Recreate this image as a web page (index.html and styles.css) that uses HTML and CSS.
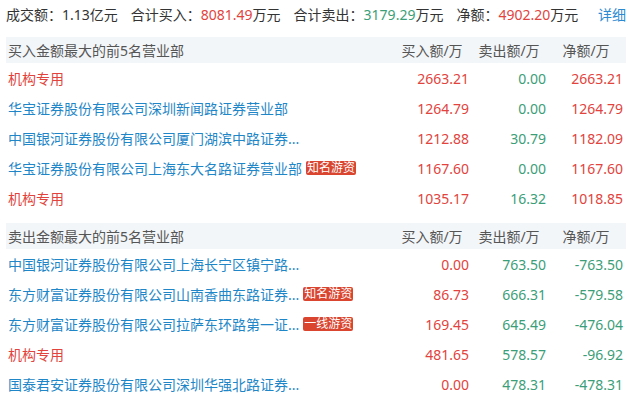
FILE: index.html
```html
<!DOCTYPE html>
<html lang="zh-CN">
<head>
<meta charset="utf-8">
<link rel="stylesheet" href="styles.css">
</head>
<body>
<div class="page">
  <div class="summary">
    <span class="item">成交额：1.13亿元</span>
    <span class="item">合计买入：<span class="red">8081.49</span>万元</span>
    <span class="item">合计卖出：<span class="green">3179.29</span>万元</span>
    <span class="item">净额：<span class="red">4902.20</span>万元</span>
    <a class="detail">详细</a>
  </div>

  <div class="section">
    <div class="row head">
      <div class="name">买入金额最大的前5名营业部</div>
      <div class="num">买入额/万</div>
      <div class="num">卖出额/万</div>
      <div class="num">净额/万</div>
    </div>
    <div class="row">
      <div class="name"><span class="inst">机构专用</span></div>
      <div class="num red">2663.21</div>
      <div class="num green">0.00</div>
      <div class="num red">2663.21</div>
    </div>
    <div class="row">
      <div class="name"><span class="link">华宝证券股份有限公司深圳新闻路证券营业部</span></div>
      <div class="num red">1264.79</div>
      <div class="num green">0.00</div>
      <div class="num red">1264.79</div>
    </div>
    <div class="row">
      <div class="name"><span class="link">中国银河证券股份有限公司厦门湖滨中路证券...</span></div>
      <div class="num red">1212.88</div>
      <div class="num green">30.79</div>
      <div class="num red">1182.09</div>
    </div>
    <div class="row">
      <div class="name"><span class="link">华宝证券股份有限公司上海东大名路证券营业部</span><span class="badge">知名游资</span></div>
      <div class="num red">1167.60</div>
      <div class="num green">0.00</div>
      <div class="num red">1167.60</div>
    </div>
    <div class="row">
      <div class="name"><span class="inst">机构专用</span></div>
      <div class="num red">1035.17</div>
      <div class="num green">16.32</div>
      <div class="num red">1018.85</div>
    </div>
  </div>

  <div class="section">
    <div class="row head">
      <div class="name">卖出金额最大的前5名营业部</div>
      <div class="num">买入额/万</div>
      <div class="num">卖出额/万</div>
      <div class="num">净额/万</div>
    </div>
    <div class="row">
      <div class="name"><span class="link">中国银河证券股份有限公司上海长宁区镇宁路...</span></div>
      <div class="num red">0.00</div>
      <div class="num green">763.50</div>
      <div class="num green">-763.50</div>
    </div>
    <div class="row">
      <div class="name"><span class="link">东方财富证券股份有限公司山南香曲东路证券...</span><span class="badge">知名游资</span></div>
      <div class="num red">86.73</div>
      <div class="num green">666.31</div>
      <div class="num green">-579.58</div>
    </div>
    <div class="row">
      <div class="name"><span class="link">东方财富证券股份有限公司拉萨东环路第一证...</span><span class="badge">一线游资</span></div>
      <div class="num red">169.45</div>
      <div class="num green">645.49</div>
      <div class="num green">-476.04</div>
    </div>
    <div class="row">
      <div class="name"><span class="inst">机构专用</span></div>
      <div class="num red">481.65</div>
      <div class="num green">578.57</div>
      <div class="num green">-96.92</div>
    </div>
    <div class="row">
      <div class="name"><span class="link">国泰君安证券股份有限公司深圳华强北路证券...</span></div>
      <div class="num red">0.00</div>
      <div class="num green">478.31</div>
      <div class="num green">-478.31</div>
    </div>
  </div>
</div>
</body>
</html>
```

FILE: styles.css
```css
html, body {
  margin: 0;
  padding: 0;
  background: #ffffff;
}

.page {
  width: 628px;
  padding: 0 2px 0 6px;
  box-sizing: border-box;
  font-family: "Noto Sans", "Noto Sans CJK SC", sans-serif;
  font-size: 14px;
  color: #333333;
}

.summary {
  display: flex;
  align-items: center;
  height: 28px;
  margin-bottom: 9px;
  white-space: nowrap;
}

.summary .item {
  margin-right: 13px;
}

.detail {
  margin-left: auto;
  color: #2b8ad2;
  cursor: pointer;
}

.red { color: #e2433d; }
.green { color: #3b9e78; }

.section + .section {
  margin-top: 10px;
}

.row {
  display: grid;
  grid-template-columns: 1fr 77px 77px 77px;
  align-items: center;
  height: 30px;
  padding: 0 3px 0 2px;
  white-space: nowrap;
}

.row.head {
  height: 26px;
  background: #f3f6f9;
  color: #555555;
}

.row.head .num {
  text-align: center;
}

.name {
  display: flex;
  align-items: center;
  overflow: hidden;
}

.num {
  padding-left: 3px;
  text-align: right;
}

.link { color: #1f87c7; }
.inst { color: #e2433d; }

.badge {
  display: inline-block;
  margin-left: 4px;
  padding: 0 1px;
  height: 14px;
  line-height: 14px;
  font-size: 12px;
  color: #ffffff;
  background: #d9452f;
  border-radius: 2px;
}
```
